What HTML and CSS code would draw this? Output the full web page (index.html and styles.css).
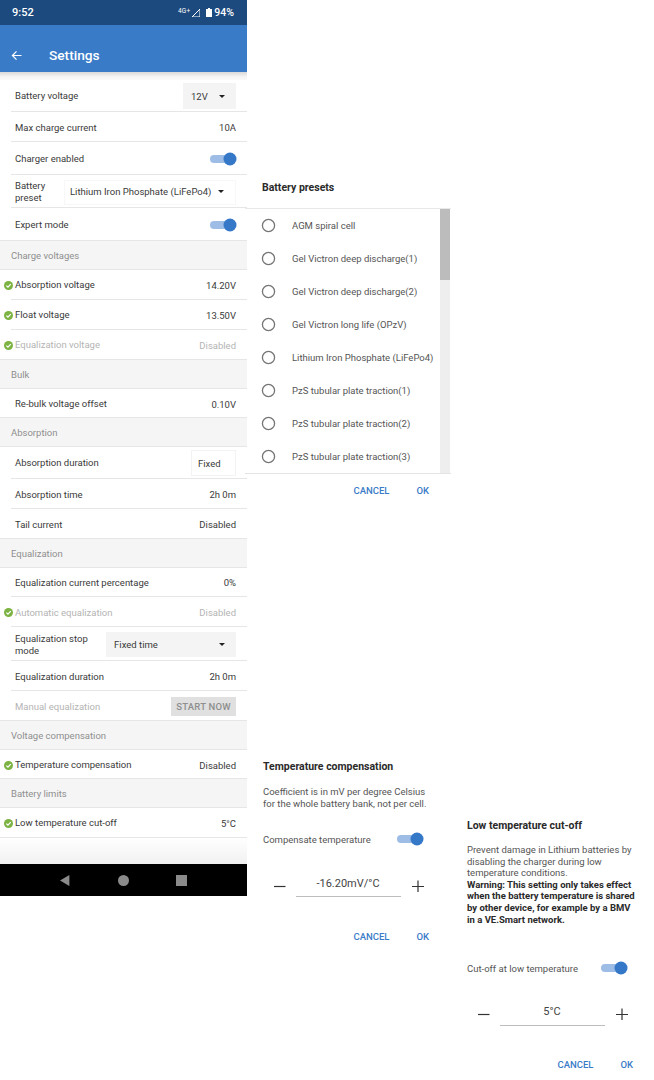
FILE: index.html
```html
<!DOCTYPE html>
<html lang="en">
<head>
<meta charset="utf-8">
<title>Settings</title>
<link rel="stylesheet" href="styles.css">
</head>
<body>
<svg class="defs" width="0" height="0" aria-hidden="true">
  <symbol id="check" viewBox="0 0 8 8"><circle cx="4" cy="4" r="4" fill="#7cb342"/><path d="M2.1 4.1 3.5 5.5 6 2.8" fill="none" stroke="#fff" stroke-width="1.1"/></symbol>
  <symbol id="caret" viewBox="0 0 6 3"><path d="M0 0h6L3 3z" fill="#222"/></symbol>
  <symbol id="toggle" viewBox="0 0 27 14"><rect x="0" y="3" width="24" height="8" rx="4" fill="#9dbde6"/><circle cx="20" cy="7" r="6.500" fill="#3578c8"/></symbol>
  <symbol id="radio" viewBox="0 0 16 16"><circle cx="8" cy="8" r="6.500" fill="none" stroke="#757575" stroke-width="1.400"/></symbol>
</svg>

<main class="panel main-panel">
  <div class="status">
    <span class="clock">9:52</span>
    <span class="status-right">
      <span class="net">4G+</span>
      <svg class="signal" viewBox="0 0 8 8"><path d="M8 0V8H0z" fill="none" stroke="#fff" stroke-width="1"/></svg>
      <svg class="batt" viewBox="0 0 6 9"><path d="M2 0h2v1h2v8H0V1h2z" fill="#fff"/></svg>
      <span class="pct">94%</span>
    </span>
  </div>
  <header class="appbar">
    <svg class="back" viewBox="0 0 12 12"><path d="M11.500 6H1.500M6 1.500 1.500 6 6 10.500" fill="none" stroke="#fff" stroke-width="1.300"/></svg>
    <h1 class="title">Settings</h1>
  </header>
  <div class="shade"></div>

  <div class="row h32 tight"><span class="label">Battery voltage</span><span class="select grey short">12V <svg class="caret"><use href="#caret"/></svg></span></div>
  <div class="row h30"><span class="label">Max charge current</span><span class="value">10A</span></div>
  <div class="row h33"><span class="label">Charger enabled</span><svg class="toggle"><use href="#toggle"/></svg></div>
  <div class="row h33"><span class="label narrow">Battery preset</span><span class="select wide">Lithium Iron Phosphate (LiFePo4) <svg class="caret"><use href="#caret"/></svg></span></div>
  <div class="row h33 last"><span class="label">Expert mode</span><svg class="toggle"><use href="#toggle"/></svg></div>

  <div class="section">Charge voltages</div>
  <div class="row h30 tight"><svg class="check"><use href="#check"/></svg><span class="label">Absorption voltage</span><span class="value">14.20V</span></div>
  <div class="row h30 tight"><svg class="check"><use href="#check"/></svg><span class="label">Float voltage</span><span class="value">13.50V</span></div>
  <div class="row h30 tight last off"><svg class="check"><use href="#check"/></svg><span class="label">Equalization voltage</span><span class="value">Disabled</span></div>

  <div class="section">Bulk</div>
  <div class="row h29 last"><span class="label">Re-bulk voltage offset</span><span class="value">0.10V</span></div>

  <div class="section">Absorption</div>
  <div class="row h32 tight"><span class="label">Absorption duration</span><span class="select plain">Fixed</span></div>
  <div class="row h30"><span class="label">Absorption time</span><span class="value">2h 0m</span></div>
  <div class="row h30 last"><span class="label">Tail current</span><span class="value">Disabled</span></div>

  <div class="section">Equalization</div>
  <div class="row h29 tight"><span class="label">Equalization current percentage</span><span class="value">0%</span></div>
  <div class="row h30 off"><svg class="check"><use href="#check"/></svg><span class="label">Automatic equalization</span><span class="value">Disabled</span></div>
  <div class="row h34"><span class="label stop">Equalization stop mode</span><span class="select grey mode">Fixed time <svg class="caret"><use href="#caret"/></svg></span></div>
  <div class="row h30"><span class="label">Equalization duration</span><span class="value">2h 0m</span></div>
  <div class="row h30 last off"><span class="label">Manual equalization</span><span class="start">START NOW</span></div>

  <div class="section">Voltage compensation</div>
  <div class="row h29 last"><svg class="check"><use href="#check"/></svg><span class="label">Temperature compensation</span><span class="value">Disabled</span></div>

  <div class="section">Battery limits</div>
  <div class="row h30 tight last"><svg class="check"><use href="#check"/></svg><span class="label">Low temperature cut-off</span><span class="value">5°C</span></div>

  <div class="filler"></div>
  <nav class="navbar">
    <svg class="nav-icon" viewBox="0 0 10 10"><path d="M8.500 0V10L0 5z" fill="#8a8a8a"/></svg>
    <svg class="nav-icon" viewBox="0 0 10 10"><circle cx="5" cy="5" r="5" fill="#8a8a8a"/></svg>
    <svg class="nav-icon" viewBox="0 0 10 10"><rect width="10" height="10" fill="#8a8a8a"/></svg>
  </nav>
</main>

<section class="panel presets">
  <h2 class="dlg-title presets-title">Battery presets</h2>
  <div class="list-wrap">
    <ul class="list">
      <li class="item"><svg class="radio"><use href="#radio"/></svg>AGM spiral cell</li>
      <li class="item"><svg class="radio"><use href="#radio"/></svg>Gel Victron deep discharge(1)</li>
      <li class="item"><svg class="radio"><use href="#radio"/></svg>Gel Victron deep discharge(2)</li>
      <li class="item"><svg class="radio"><use href="#radio"/></svg>Gel Victron long life (OPzV)</li>
      <li class="item"><svg class="radio"><use href="#radio"/></svg>Lithium Iron Phosphate (LiFePo4)</li>
      <li class="item"><svg class="radio"><use href="#radio"/></svg>PzS tubular plate traction(1)</li>
      <li class="item"><svg class="radio"><use href="#radio"/></svg>PzS tubular plate traction(2)</li>
      <li class="item"><svg class="radio"><use href="#radio"/></svg>PzS tubular plate traction(3)</li>
    </ul>
    <div class="scrollbar"><div class="thumb"></div></div>
  </div>
  <div class="actions presets-actions"><span class="action">CANCEL</span><span class="action">OK</span></div>
</section>

<section class="panel temp">
  <h2 class="dlg-title">Temperature compensation</h2>
  <p class="dlg-text temp-text">Coefficient is in mV per degree Celsius<br>for the whole battery bank, not per cell.</p>
  <div class="switch-row temp-switch"><span>Compensate temperature</span><svg class="toggle"><use href="#toggle"/></svg></div>
  <div class="stepper">
    <svg class="step" viewBox="0 0 12 12"><path d="M0 6.500H11.500" stroke="#333" stroke-width="1.200"/></svg>
    <span class="step-value">-16.20mV/°C</span>
    <svg class="step" viewBox="0 0 12 12"><path d="M0 6.500H12M6 .5V12.500" stroke="#333" stroke-width="1.200"/></svg>
  </div>
  <div class="actions"><span class="action">CANCEL</span><span class="action">OK</span></div>
</section>

<section class="panel low">
  <h2 class="dlg-title">Low temperature cut-off</h2>
  <p class="dlg-text low-text">Prevent damage in Lithium batteries by disabling the charger during low temperature conditions.<br><b class="warn">Warning: This setting only takes effect when the battery temperature is shared by other device, for example by a BMV in a VE.Smart network.</b></p>
  <div class="switch-row low-switch"><span>Cut-off at low temperature</span><svg class="toggle"><use href="#toggle"/></svg></div>
  <div class="stepper low-stepper">
    <svg class="step" viewBox="0 0 12 12"><path d="M0 6.500H11.500" stroke="#333" stroke-width="1.200"/></svg>
    <span class="step-value">5°C</span>
    <svg class="step" viewBox="0 0 12 12"><path d="M0 6.500H12M6 .5V12.500" stroke="#333" stroke-width="1.200"/></svg>
  </div>
  <div class="actions"><span class="action">CANCEL</span><span class="action">OK</span></div>
</section>
</body>
</html>
```
FILE: styles.css
```css
* { box-sizing: border-box; }
html, body { margin: 0; padding: 0; }
body {
  width: 654px;
  height: 1080px;
  position: relative;
  overflow: hidden;
  background: #fff;
  font-family: Roboto, "Liberation Sans", sans-serif;
  font-size: 9.5px;
  color: #333;
}
.defs { position: absolute; }
.panel { position: absolute; }
.main-panel { left: 0; top: 0; width: 247px; display: flex; flex-direction: column; }

.status {
  height: 25px;
  background: #1d4a7e;
  color: #fff;
  display: flex;
  align-items: center;
  justify-content: space-between;
  padding: 0 13px 0 12px;
}
.clock { font-size: 11px; font-weight: 500; }
.status-right { display: flex; align-items: center; gap: 2px; }
.net { font-size: 6.5px; letter-spacing: .2px; margin-bottom: 4px; }
.signal { width: 8px; height: 8px; margin-right: 4px; }
.batt { width: 6px; height: 9px; }
.pct { font-size: 10.5px; font-weight: 500; }

.appbar {
  height: 47px;
  background: #3a7bc8;
  display: flex;
  align-items: center;
  padding: 13px 0 0 11px;
}
.back { width: 11px; height: 11px; }
.title { margin: 0 0 0 27px; font-size: 13.7px; font-weight: 500; color: #fff; }
.shade { height: 8px; background: linear-gradient(#d9d9d9, #f4f4f4 60%, #fafafa); }

.row {
  position: relative;
  display: flex;
  align-items: center;
  justify-content: space-between;
  padding: 1px 11px 0 15px;
  background: #fff;
  color: #3a3a3a;
}
.row.tight { padding-top: 0; }
.row::after {
  content: "";
  position: absolute;
  left: 11px;
  right: 0;
  bottom: 0;
  height: 1px;
  background: #e6e6e6;
}
.row.last::after { left: 0; }
.h29 { height: 29px; }
.h30 { height: 30px; }
.h32 { height: 32px; }
.h33 { height: 33px; }
.h34 { height: 34px; }
.off .label, .off .value { color: #b4b4b4; }
.label { line-height: 12px; }
.narrow { width: 40px; }
.stop { width: 92px; }
.value { text-align: right; }
.check { position: absolute; left: 3.500px; width: 9px; height: 9px; }
.caret { width: 6px; height: 3px; }
.toggle { width: 27px; height: 14px; margin-right: -1px; }

.select {
  display: flex;
  align-items: center;
  justify-content: space-between;
  height: 26px;
  padding: 0 11px 0 8px;
}
.grey { background: #f4f4f4; }
.short { width: 53px; }
.wide { width: 172px; height: 25px; padding: 0 11px 1px 5px; border: 1px solid #f7f7f7; white-space: nowrap; }
.plain { width: 45px; padding: 0 6px; border: 1px solid #f3f3f3; }
.mode { width: 131px; height: 25px; }
.start {
  width: 65px;
  height: 19px;
  background: #e0e0e0;
  color: #8e8e8e;
  font-weight: 500;
  display: flex;
  align-items: center;
  justify-content: center;
  letter-spacing: .2px;
}

.section {
  height: 29px;
  display: flex;
  align-items: center;
  padding: 0 0 0 11px;
  background: #f5f5f5;
  color: #8f8f8f;
  border-bottom: 1px solid #e6e6e6;
}
.filler { height: 26px; background: linear-gradient(#fff, #f1f1f1); }
.navbar {
  height: 32px;
  background: #000;
  display: flex;
  align-items: center;
  justify-content: center;
  gap: 47px;
}
.nav-icon { width: 11px; height: 11px; }

.dlg-title { margin: 0; font-size: 10.5px; font-weight: 700; color: #2a2a2a; line-height: 13px; }
.dlg-text { margin: 0; color: #555; line-height: 11.600px; width: 172px; }

.presets { left: 245px; top: 181px; width: 206px; }
.presets-title { padding-left: 17px; height: 27px; }
.list-wrap { display: flex; height: 266px; border-top: 1px solid #e8e8e8; border-bottom: 1px solid #e4e4e4; }
.list { margin: 0; padding: 0; list-style: none; flex: 1; height: 264px; overflow: hidden; }
.item { height: 33px; display: flex; align-items: center; padding: 0 0 1px 16px; gap: 16px; color: #555; white-space: nowrap; }
.radio { width: 15px; height: 15px; flex: none; }
.scrollbar { width: 10px; background: #eee; margin-right: 1px; }
.thumb { height: 71px; background: #bcbcbc; }
.actions { display: flex; justify-content: flex-end; gap: 27px; margin: 20px -5px 0 0; }
.action { color: #3a7bc8; font-weight: 500; line-height: 12px; }
.presets-actions { margin: 11px 22px 0 0; }

.temp { left: 263px; top: 760px; width: 161px; }
.temp-text { margin-top: 13px; }
.switch-row { display: flex; align-items: center; justify-content: space-between; color: #555; white-space: nowrap; }
.switch-row .toggle { margin-right: 0; }
.temp-switch { margin-top: 23px; }
.stepper { display: flex; align-items: flex-start; justify-content: space-between; margin: 31px 0 0 11px; height: 34px; }
.step { width: 12px; height: 12px; margin-top: 3px; flex: none; }
.step-value { width: 105px; height: 20px; margin-right: 2px; border-bottom: 1px solid #bdbdbd; text-align: center; font-size: 11px; line-height: 14px; color: #444; }

.low { left: 467px; top: 819px; width: 161px; }
.low-text { margin-top: 12px; }
.warn { color: #2a2a2a; font-weight: 700; }
.low-switch { margin-top: 36px; }
.low-stepper { margin-top: 30px; }
.low-stepper .step-value { height: 21px; }
```
